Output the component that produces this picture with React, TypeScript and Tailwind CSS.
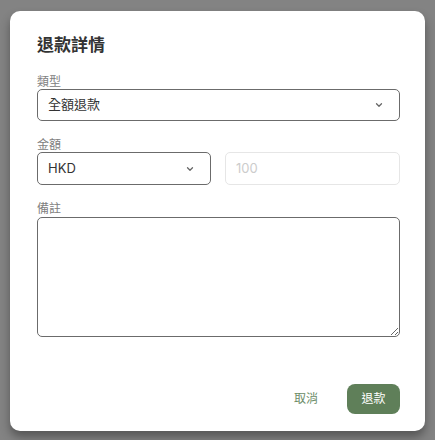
import { ChevronDown } from "lucide-react";

const font = { fontFamily: "Inter, 'Noto Sans CJK TC', sans-serif" };

function Select({ value, className = "" }: { value: string; className?: string }) {
  return (
    <div
      className={`flex items-center justify-between rounded-[5px] border border-[#6b6b6b] bg-white pl-[10px] pr-[15px] text-[13px] text-[#333] ${className}`}
    >
      <span>{value}</span>
      <ChevronDown size={10} strokeWidth={3} className="text-[#666]" />
    </div>
  );
}

export default function App() {
  return (
    <div className="flex h-[440px] w-[435px] items-start bg-[#838383] pl-[10px] pt-[11px]" style={font}>
      {/* dialog */}
      <div className="flex h-[420px] w-[415px] flex-col rounded-[10px] bg-white pl-[27px] pr-[25px] pt-[21px] pb-[17px] shadow-[0_6px_10px_rgba(0,0,0,0.35)]">
        <h2 className="text-[17px] font-semibold leading-[26px] text-[#333]">退款詳情</h2>

        <label className="mt-[18px] text-[12px] leading-[12px] text-[#808080]">類型</label>
        <Select value="全額退款" className="mt-[1px] h-[32px]" />

        <label className="mt-[18px] text-[12px] leading-[12px] text-[#808080]">金額</label>
        <div className="mt-[1px] flex gap-[14px]">
          <Select value="HKD" className="h-[33px] w-[174px]" />
          <div className="flex h-[33px] flex-1 items-center rounded-[5px] border border-[#e6e6e6] pl-[10px] text-[13px] text-[#cccccc]">
            100
          </div>
        </div>

        <label className="mt-[18px] text-[12px] leading-[12px] text-[#808080]">備註</label>
        <textarea className="mt-[2px] h-[120px] w-full resize-y rounded-[5px] border border-[#6b6b6b] outline-none" />

        <div className="mt-auto flex items-center justify-end gap-[29px]">
          <button className="text-[12px] text-[#6b8c67]">取消</button>
          <button className="h-[30px] w-[53px] rounded-[8px] bg-[#5f7f59] text-[12px] text-white">退款</button>
        </div>
      </div>
    </div>
  );
}
